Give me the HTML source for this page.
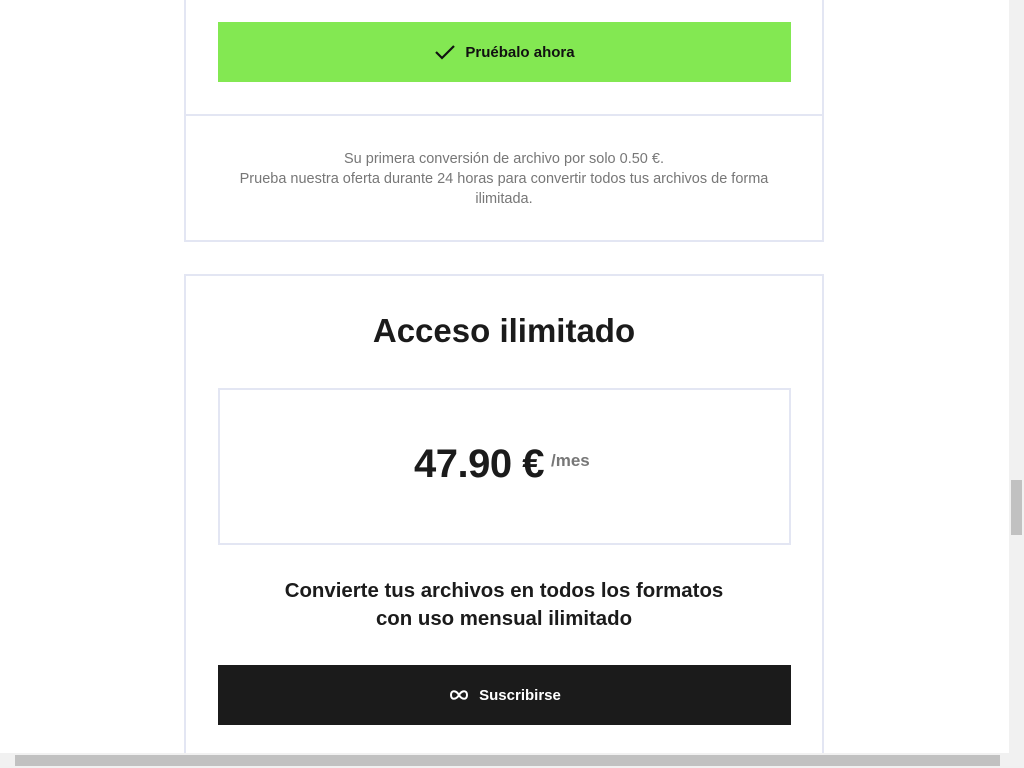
<!DOCTYPE html>
<html style="overflow:hidden;height:768px"><head><meta charset="utf-8"><style>
*{margin:0;padding:0;box-sizing:border-box}
body{width:1024px;height:768px;overflow:hidden;background:#fff;font-family:"Liberation Sans",sans-serif;position:relative}
.card{position:absolute;left:184px;width:640px;border:2px solid #e3e6f3;background:#fff}
.btn{position:absolute;left:218px;width:573px;height:60px;display:flex;align-items:center;justify-content:center;font-weight:bold;font-size:15px}
.t{position:absolute;left:186px;width:636px;text-align:center}
.sb{position:absolute;z-index:5}
</style></head><body>
<div class="card" style="top:-2px;height:118px;border-top:none"></div>
<div class="card" style="top:114px;height:128px"></div>
<div class="btn" style="top:22px;background:#83e852;color:#111"><svg width="22" height="18" viewBox="0 0 22 18" style="margin-right:9px"><path d="M2 9 L8 15 L20 3" stroke="#111" stroke-width="2.2" fill="none"/></svg>Pruébalo ahora</div>
<div class="t" style="top:149px;font-size:14.5px;line-height:20px;color:#777">Su primera conversión de archivo por solo 0.50 €.<br>Prueba nuestra oferta durante 24 horas para convertir todos tus archivos de forma<br>ilimitada.</div>
<div class="card" style="top:274px;height:494px;border-bottom:none"></div>
<div class="t" style="top:312px;font-size:33px;font-weight:bold;color:#1b1b1b">Acceso ilimitado</div>
<div style="position:absolute;left:218px;top:388px;width:573px;height:157px;border:2px solid #e3e6f3"></div>
<div style="position:absolute;left:414px;top:442px;font-size:40px;font-weight:bold;color:#1b1b1b;letter-spacing:-0.5px">47.90 €</div>
<div style="position:absolute;left:551px;top:451px;font-size:17px;font-weight:bold;color:#777">/mes</div>
<div class="t" style="top:577px;font-size:20.4px;line-height:28px;font-weight:bold;color:#1b1b1b">Convierte tus archivos en todos los formatos<br>con uso mensual ilimitado</div>
<div class="btn" style="top:665px;background:#1b1b1b;color:#fff"><svg width="22" height="14" viewBox="0 0 22 14" style="margin-right:9px"><path d="M11 7 C8 2 3 2 3 7 C3 12 8 12 11 7 C14 2 19 2 19 7 C19 12 14 12 11 7Z" stroke="#fff" stroke-width="2" fill="none"/></svg>Suscribirse</div>
<div class="sb" style="left:1009px;top:0;width:15px;height:768px;background:#f1f1f1"></div>
<div class="sb" style="left:1011px;top:480px;width:11px;height:55px;background:#c1c1c1"></div>
<div class="sb" style="left:0;top:753px;width:1024px;height:15px;background:#f1f1f1"></div>
<div class="sb" style="left:15px;top:755px;width:985px;height:11px;background:#c1c1c1"></div>
</body></html>
